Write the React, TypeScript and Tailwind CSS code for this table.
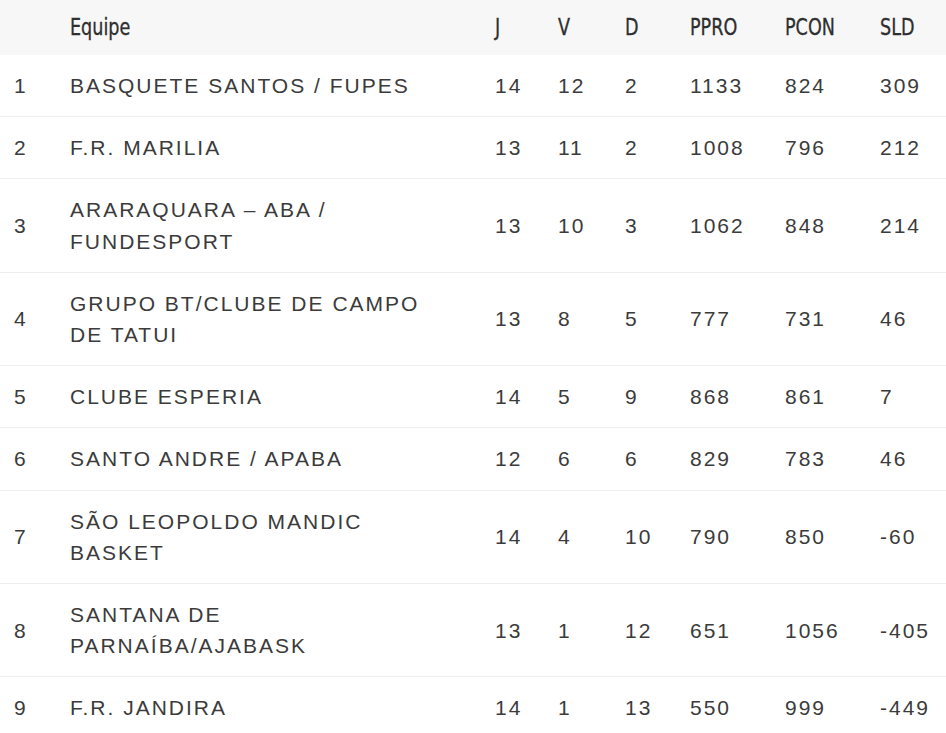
const rows = [
  { pos: 1, team: "BASQUETE SANTOS / FUPES", j: 14, v: 12, d: 2, ppro: 1133, pcon: 824, sld: 309 },
  { pos: 2, team: "F.R. MARILIA", j: 13, v: 11, d: 2, ppro: 1008, pcon: 796, sld: 212 },
  { pos: 3, team: "ARARAQUARA – ABA / FUNDESPORT", j: 13, v: 10, d: 3, ppro: 1062, pcon: 848, sld: 214 },
  { pos: 4, team: "GRUPO BT/CLUBE DE CAMPO DE TATUI", j: 13, v: 8, d: 5, ppro: 777, pcon: 731, sld: 46 },
  { pos: 5, team: "CLUBE ESPERIA", j: 14, v: 5, d: 9, ppro: 868, pcon: 861, sld: 7 },
  { pos: 6, team: "SANTO ANDRE / APABA", j: 12, v: 6, d: 6, ppro: 829, pcon: 783, sld: 46 },
  { pos: 7, team: "SÃO LEOPOLDO MANDIC BASKET", j: 14, v: 4, d: 10, ppro: 790, pcon: 850, sld: -60 },
  { pos: 8, team: "SANTANA DE PARNAÍBA/AJABASK", j: 13, v: 1, d: 12, ppro: 651, pcon: 1056, sld: -405 },
  { pos: 9, team: "F.R. JANDIRA", j: 14, v: 1, d: 13, ppro: 550, pcon: 999, sld: -449 },
];

const cols = "grid grid-cols-[70px_425px_63px_67px_65px_95px_95px_66px]";

const heads = ["", "Equipe", "J", "V", "D", "PPRO", "PCON", "SLD"];

export default function App() {
  return (
    <div className="w-[946px] bg-white text-[#3b3b3b]">
      {/* header: condensed face squeezed a bit to get close to Oswald */}
      <div
        className={`${cols} h-[55px] items-center bg-[#f7f7f7] text-[23px] font-['DejaVu_Sans',sans-serif] font-stretch-condensed text-[#2f2f2f]`}
      >
        {heads.map((h, i) => (
          <div key={i}>
            <span className="inline-block origin-left scale-x-[0.85] [-webkit-text-stroke:0.3px_#2f2f2f]">{h}</span>
          </div>
        ))}
      </div>
      {rows.map((r) => (
        <div
          key={r.pos}
          className={`${cols} items-center border-b border-[#efefef] py-[15px] text-[21px] leading-[31.2px] tracking-[2px] font-['Liberation_Sans',sans-serif]`}
        >
          <div className="pl-[14px]">{r.pos}</div>
          <div className="pr-[40px]">{r.team}</div>
          <div>{r.j}</div>
          <div>{r.v}</div>
          <div>{r.d}</div>
          <div>{r.ppro}</div>
          <div>{r.pcon}</div>
          <div>{r.sld}</div>
        </div>
      ))}
    </div>
  );
}
